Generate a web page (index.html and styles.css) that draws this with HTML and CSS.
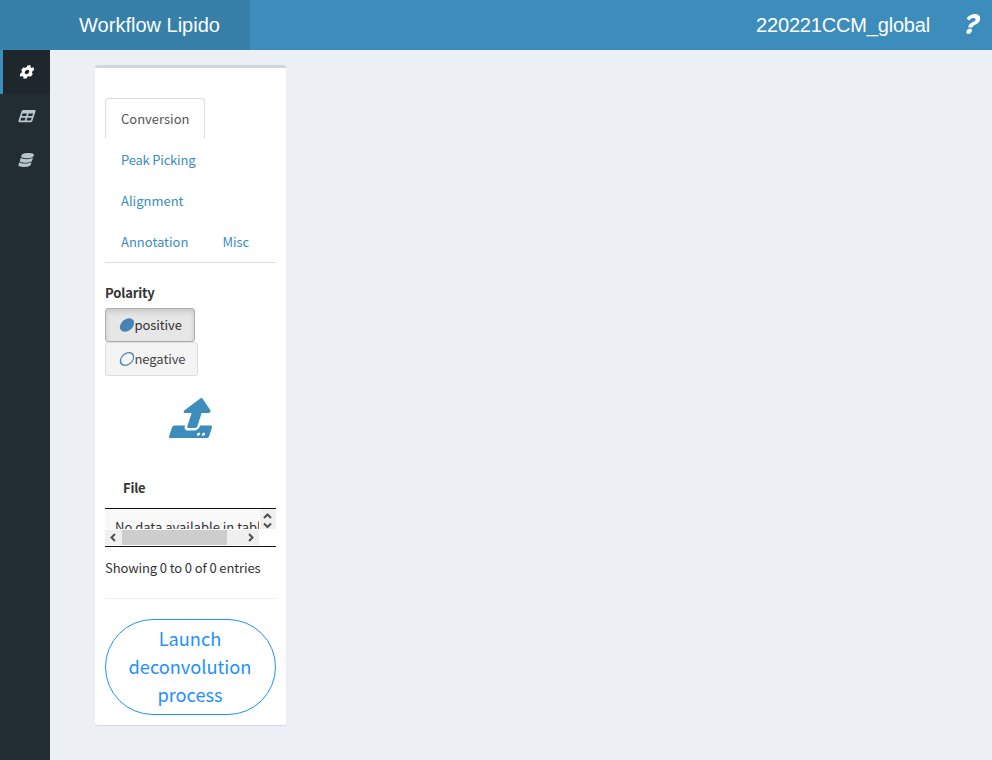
FILE: index.html
```html
<!DOCTYPE html>
<html lang="en">
<head>
<meta charset="utf-8">
<title>Workflow Lipido</title>
<link rel="stylesheet" href="styles.css">
</head>
<body>
<header class="header">
  <div class="logo">Workflow Lipido</div>
  <nav class="navbar">
    <span class="project">220221CCM_global</span>
    <svg class="icon icon-help" viewBox="0 0 384 512"><path d="M202.021 0C122.202 0 70.503 32.703 29.914 91.026c-7.363 10.58-5.093 25.086 5.178 32.874l43.138 32.709c10.373 7.865 25.132 6.026 33.253-4.148 25.049-31.381 43.63-49.449 82.757-49.449 30.764 0 68.816 19.799 68.816 49.631 0 22.552-18.617 34.134-48.993 51.164-35.423 19.86-82.299 44.576-82.299 106.405V320c0 13.255 10.745 24 24 24h72.471c13.255 0 24-10.745 24-24v-5.773c0-42.86 125.268-44.645 125.268-160.627C377.504 66.256 286.902 0 202.021 0zM192 373.459c-38.196 0-69.271 31.075-69.271 69.271 0 38.195 31.075 69.27 69.271 69.27s69.271-31.075 69.271-69.271-31.075-69.27-69.271-69.27z"/></svg>
  </nav>
</header>
<div class="layout">
  <aside class="sidebar">
    <a class="side-item active"><svg class="icon" viewBox="0 0 512 512"><path d="M487.4 315.7l-42.6-24.6c4.3-23.2 4.3-47 0-70.2l42.6-24.6c4.9-2.8 7.1-8.6 5.5-14-11.1-35.6-30-67.8-54.7-94.6-3.8-4.1-10-5.1-14.8-2.3L380.8 110c-17.9-15.4-38.5-27.3-60.8-35.1V25.8c0-5.6-3.9-10.5-9.4-11.7-36.7-8.2-74.3-7.8-109.2 0-5.5 1.2-9.4 6.1-9.4 11.7V75c-22.2 7.9-42.8 19.8-60.8 35.1L88.7 85.5c-4.9-2.8-11-1.9-14.8 2.3-24.7 26.7-43.6 58.9-54.7 94.6-1.7 5.4.6 11.2 5.5 14L67.3 221c-4.3 23.2-4.3 47 0 70.2l-42.6 24.6c-4.9 2.8-7.1 8.6-5.5 14 11.1 35.6 30 67.8 54.7 94.6 3.8 4.1 10 5.1 14.8 2.3l42.6-24.6c17.9 15.4 38.5 27.3 60.8 35.1v49.2c0 5.6 3.9 10.5 9.4 11.7 36.7 8.2 74.3 7.8 109.2 0 5.5-1.2 9.4-6.1 9.4-11.7v-49.2c22.2-7.9 42.8-19.8 60.8-35.1l42.6 24.6c4.9 2.8 11 1.9 14.8-2.3 24.7-26.7 43.6-58.9 54.7-94.6 1.5-5.5-.7-11.3-5.6-14.1zM256 336c-44.1 0-80-35.9-80-80s35.9-80 80-80 80 35.9 80 80-35.9 80-80 80z"/></svg></a>
    <a class="side-item"><svg class="icon" viewBox="0 0 512 512"><path d="M464 32H48C21.49 32 0 53.49 0 80v352c0 26.51 21.49 48 48 48h416c26.51 0 48-21.49 48-48V80c0-26.51-21.49-48-48-48zM224 416H64v-96h160v96zm0-160H64v-96h160v96zm224 160H288v-96h160v96zm0-160H288v-96h160v96z"/></svg></a>
    <a class="side-item"><svg class="icon icon-db" viewBox="0 0 448 512"><path d="M448 73.143v45.714C448 159.143 347.667 192 224 192S0 159.143 0 118.857V73.143C0 32.857 100.333 0 224 0s224 32.857 224 73.143zM448 176v102.857C448 319.143 347.667 352 224 352S0 319.143 0 278.857V176c48.125 33.143 136.208 48.572 224 48.572S399.874 209.143 448 176zm0 160v102.857C448 479.143 347.667 512 224 512S0 479.143 0 438.857V336c48.125 33.143 136.208 48.572 224 48.572S399.874 369.143 448 336z"/></svg></a>
  </aside>
  <main class="content">
    <section class="box">
      <ul class="tabs">
        <li class="tab active">Conversion</li>
        <li class="tab tight">Peak Picking</li>
        <li class="tab">Alignment</li>
        <li class="tab">Annotation</li>
        <li class="tab">Misc</li>
      </ul>
      <div class="label">Polarity</div>
      <div class="choices">
        <button class="choice selected"><svg class="icon icon-dot" viewBox="0 0 14 14"><circle cx="7" cy="7" r="6.8"/></svg>positive</button>
        <button class="choice"><svg class="icon icon-dot icon-ring" viewBox="0 0 14 14"><circle cx="7" cy="7" r="6.3"/></svg>negative</button>
      </div>
      <div class="upload"><svg class="icon icon-upload" viewBox="0 0 512 512"><path d="M296 384h-80c-13.3 0-24-10.7-24-24V192h-87.7c-17.8 0-26.7-21.5-14.1-34.1L242.3 5.7c7.5-7.5 19.8-7.5 27.3 0l152.2 152.2c12.6 12.6 3.7 34.1-14.1 34.1H320v168c0 13.3-10.7 24-24 24zm216-8v112c0 13.3-10.7 24-24 24H24c-13.3 0-24-10.7-24-24V376c0-13.3 10.7-24 24-24h136v8c0 30.9 25.1 56 56 56h80c30.9 0 56-25.1 56-56v-8h136c13.3 0 24 10.7 24 24zm-124 88c0-11-9-20-20-20s-20 9-20 20 9 20 20 20 20-9 20-20zm64 0c0-11-9-20-20-20s-20 9-20 20 9 20 20 20 20-9 20-20z"/></svg></div>
      <div class="table-head">File</div>
      <div class="table-body">
        <div class="cell"><span>No data available in table</span></div>
        <div class="vbar">
          <svg viewBox="0 0 16 20"><path d="M4 9L7.5 5.5L11 9M4 14.5L7.5 18L11 14.5"/></svg>
        </div>
        <div class="hbar">
          <svg viewBox="0 0 17 16"><path d="M10 4L6.5 7.5L10 11"/></svg>
          <div class="thumb"></div>
          <svg viewBox="0 0 17 16"><path d="M7 4L10.5 7.5L7 11"/></svg>
        </div>
      </div>
      <div class="info">Showing 0 to 0 of 0 entries</div>
      <hr class="rule">
      <button class="launch">Launch<br>deconvolution<br>process</button>
    </section>
  </main>
</div>
</body>
</html>
```
FILE: styles.css
```css
* { box-sizing: border-box; }
body {
  margin: 0;
  height: 760px;
  overflow: hidden;
  display: flex;
  flex-direction: column;
  background: #ecf0f5;
  color: #333;
  font: 13px/20px "Noto Sans CJK SC", sans-serif;
}
.icon {
  display: block;
  width: 14px;
  height: 14px;
  flex: none;
  overflow: visible;
  fill: currentColor;
  transform: skewX(-18deg);
}
.header {
  display: flex;
  height: 50px;
  color: #fff;
  font: 20px/50px "Liberation Sans", Arial, sans-serif;
}
.logo { width: 250px; padding-left: 49px; background: #367fa9; text-align: center; }
.navbar {
  flex: 1;
  display: flex;
  align-items: center;
  justify-content: flex-end;
  padding-right: 13px;
  background: #3c8dbc;
}
.project { letter-spacing: -.18px; }
.icon-help { width: 15px; height: 20px; margin-left: 34px; margin-bottom: 3px; }
.layout { flex: 1; display: flex; }
.sidebar { width: 50px; background: #222d32; color: #b8c7ce; }
.side-item {
  display: flex;
  align-items: center;
  height: 44px;
  padding-left: 17px;
  border-left: 3px solid transparent;
}
.side-item.active { background: #1e282c; border-left-color: #3c8dbc; color: #fff; }
.icon-db { width: 12.25px; }
.content { padding: 15px 0 0 45px; }
.box {
  width: 191px;
  height: 660px;
  padding: 30px 10px 10px;
  border-top: 3px solid #d2d6de;
  border-radius: 3px;
  background: #fff;
  box-shadow: 0 1px 1px rgba(0, 0, 0, .1);
}
.tabs {
  display: flex;
  flex-wrap: wrap;
  margin: 0;
  padding: 0;
  list-style: none;
  border-bottom: 1px solid #ddd;
}
.tab {
  height: 41px;
  margin-right: 2px;
  padding: 10px 15px;
  border: 1px solid transparent;
  color: #3c8dbc;
}
.tab.tight { letter-spacing: -.2px; }
.tab.active { border-color: #ddd #ddd transparent; border-radius: 4px 4px 0 0; color: #555; }
.label { margin-top: 20px; font-weight: 700; letter-spacing: -.15px; }
.choices { display: flex; flex-direction: column; align-items: flex-start; margin-top: 5px; }
.choice {
  display: flex;
  align-items: center;
  height: 34px;
  padding: 0 12px 0 13.5px;
  border: 1px solid #ddd;
  border-radius: 3px;
  background: #f4f4f4;
  color: #444;
  font: inherit;
  letter-spacing: -.08px;
}
.choice.selected {
  border-color: #adadad;
  background: #e6e6e6;
  color: #333;
  box-shadow: inset 0 3px 5px rgba(0, 0, 0, .125);
}
.icon-dot { margin-right: 1px; fill: steelblue; }
.icon-ring { fill: none; stroke: steelblue; stroke-width: 1.2; }
.upload { display: flex; justify-content: center; margin-top: 22px; padding-left: 8px; }
.icon-upload { width: 40px; height: 40px; color: #3c8dbc; }
.table-head { margin-top: 40px; padding: 0 18px 10px; font-weight: 700; letter-spacing: -.2px; }
.table-body {
  display: grid;
  grid-template: 21px 16px / 155px 16px;
  height: 39px;
  border-top: 1px solid #111;
  border-bottom: 1px solid #111;
}
.cell { width: 154px; height: 20px; overflow: hidden; padding: 8px 0 0 10px; background: #f9f9f9; white-space: nowrap; }
.cell span { display: block; }
.vbar { height: 20px; background: #f0f0f0; }
.vbar svg { display: block; width: 16px; height: 20px; }
.hbar { display: flex; width: 154px; height: 15px; background: #f0f0f0; }
.hbar svg { width: 17px; height: 16px; }
.table-body path { fill: none; stroke: #505050; stroke-width: 2; }
.thumb { width: 105px; margin-right: 15px; background: #cdcdcd; }
.info { margin-top: 11px; letter-spacing: -.11px; }
.rule { height: 1px; margin: 20px 0; border: 0; background: #eee; }
.launch {
  display: block;
  width: 171px;
  height: 96px;
  padding: 0 1px 2px 0;
  border: 1px solid #1e90ff;
  border-radius: 48px;
  background: #fff;
  color: #1e90ff;
  font: 18.2px/28px "Noto Sans CJK SC", sans-serif;
}
```
